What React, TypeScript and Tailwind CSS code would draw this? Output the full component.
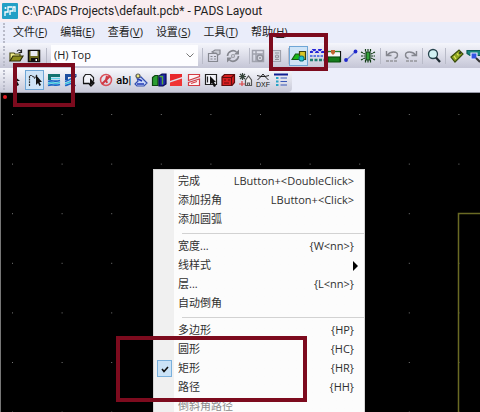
import type { ReactNode } from "react";

function Icon({ children }: { children: ReactNode }) {
  return (
    <svg viewBox="0 0 16 16" className="block size-4 shrink-0" fill="none" stroke="#111" strokeWidth="1.2" aria-hidden="true">
      {children}
    </svg>
  );
}

const icons = {
  open: (
    <Icon>
      <path d="M2 13V5h4l1 1h5v3" fill="#f3ef8e" stroke="#4b4a12" />
      <path d="M2 13l3-5h10l-3 5z" fill="#8c8b1c" stroke="#2c2c08" />
      <path d="M9 3.500c1-2 3-2 4 0M13.500 1.500v3h-3" stroke="#222" />
    </Icon>
  ),
  save: (
    <Icon>
      <path d="M2.500 2.500h11v11h-11z" fill="#6d6b1f" stroke="#111" strokeWidth="1.500" />
      <path d="M4.500 3h7v5h-7z" fill="#e9ebf3" stroke="none" />
      <path d="M5 10h7v4H5z" fill="#111" stroke="none" />
      <path d="M9.500 11h1.500v2H9.500z" fill="#fff" stroke="none" />
    </Icon>
  ),
  props: (
    <Icon>
      <path d="M2.500 5.500h9v8h-9zM4.500 8.500h2M8 8.500h2M4.500 11h2M8 11h2" stroke="#85878f" />
      <path d="M6 4l3-2h5v4l-2 1-2-2H8z" fill="#c9cbd3" stroke="#85878f" />
    </Icon>
  ),
  cycle: (
    <Icon>
      <path d="M2.500 8a5.500 5.500 0 0 1 9-4M13.500 8a5.500 5.500 0 0 1-9 4" stroke="#85878f" strokeWidth="1.600" />
      <path d="M14 1.500v5H9zM2 14.500v-5h5z" fill="#85878f" stroke="none" />
      <circle cx="8" cy="8" r="1.500" stroke="#9b9da5" />
    </Icon>
  ),
  disabledBoard: (
    <Icon>
      <path d="M2.500 2.500h11v11h-11zM2.500 6h11M6 2.500v11" stroke="#a0a2ad" strokeWidth="1.500" />
      <circle cx="10" cy="10" r="3" fill="#d4d6de" stroke="#8f919b" strokeWidth="1.500" />
      <circle cx="10" cy="10" r="1" fill="#8f919b" stroke="none" />
    </Icon>
  ),
  disabledPage: (
    <Icon>
      <path d="M4.500 2.500h8v11h-8z" fill="#d4d6df" stroke="#a0a2ad" />
      <path d="M7 5h4M7 11.500h4" stroke="#8f919b" />
      <circle cx="9" cy="8.500" r="1.500" stroke="#8f919b" />
    </Icon>
  ),
  drafting: (
    <Icon>
      <path d="M1 11.500l3.500-5.500h4l2 5.500z" fill="#19b819" stroke="#145a14" />
      <path d="M8.500 3.500h6v8h-4l-2-4z" fill="#d9c625" stroke="#3c4310" />
      <circle cx="10.500" cy="10.500" r="2.500" fill="#20c6d0" stroke="#0c7484" />
    </Icon>
  ),
  design: (
    <Icon>
      <path d="M1 4h2l1-2h2l1 2h2l1-2h2l1 2h2" stroke="#2525d8" strokeWidth="2.200" strokeDasharray="3 1" />
      <path d="M1 8h14" stroke="#3a5ae0" strokeWidth="1.600" strokeDasharray="2.500 1" />
      <path d="M1 12h14" stroke="#1f7f70" strokeWidth="2.600" strokeDasharray="3 1.500" />
    </Icon>
  ),
  dimension: (
    <Icon>
      <path d="M1.500 3v11M14.500 3v11" stroke="#111" />
      <path d="M2 3.500h12" stroke="#258229" />
      <path d="M2 9h12v5H2z" fill="#147b1b" stroke="#064c0b" />
      <path d="M2 6.500h12" stroke="#f5f7f5" strokeWidth="3" />
      <path d="M5 2h4v3L7 7 5 5z" fill="#c26632" stroke="none" />
    </Icon>
  ),
  route: (
    <Icon>
      <path d="M3.500 12l9-8.500" stroke="#6f80d8" />
      <circle cx="3" cy="12" r="1.900" fill="#2029cb" stroke="none" />
      <circle cx="12.500" cy="3.500" r="1.900" fill="#2029cb" stroke="none" />
    </Icon>
  ),
  chip: (
    <Icon>
      <path d="M6 4h4v8H6z" fill="#31a138" stroke="#123c16" />
      <path d="M8 1v3M8 12v3M5.500 1v3M10.500 1v3M5.500 12v3M10.500 12v3M1 4l4 2M15 4l-4 2M1 12l4-2M15 12l-4-2M1 8h4M11 8h4" stroke="#123c16" strokeDasharray="2 0.600" />
    </Icon>
  ),
  undo: (
    <Icon>
      <path d="M3.500 7c3-4 10-4 10 0 0 2-1 3-3 3.500M2.500 3v4.500h5" stroke="#85878f" strokeWidth="1.400" />
      <path d="M2 13h11" stroke="#777" strokeDasharray="3 1" />
    </Icon>
  ),
  redo: (
    <Icon>
      <path d="M12.500 7c-3-4-10-4-10 0 0 2 1 3 3 3.500M13.500 3v4.500h-5" stroke="#85878f" strokeWidth="1.400" />
      <path d="M3 13h11" stroke="#777" strokeDasharray="3 1" />
    </Icon>
  ),
  zoom: (
    <Icon>
      <circle cx="7" cy="6" r="4.500" fill="#d2f2f4" stroke="#26434c" strokeWidth="1.300" />
      <path d="M10 9.500l4 4.500" stroke="#1c2930" strokeWidth="2.200" />
    </Icon>
  ),
  board: (
    <Icon>
      <path d="M2 9l8-7 4 4-8 8z" fill="#8ca51f" stroke="#394b0b" />
      <path d="M5 8l2 3M8 5.500l1.500 2" stroke="#e9e667" />
      <circle cx="11" cy="5" r="1" fill="#223" stroke="none" />
    </Icon>
  ),
  boardZoom: (
    <Icon>
      <path d="M1 2.500h14v5H4l-3-2z" fill="#188780" stroke="#0a5d58" />
      <path d="M5 5h6v6H5z" fill="#3355e2" stroke="#e4e6ff" />
      <path d="M10 10l4 4" stroke="#333" strokeWidth="2" />
    </Icon>
  ),
  select: (
    <Icon>
      <path d="M5 3v9l2-2 2 4 2-1-2-4h3z" fill="#111" stroke="none" />
    </Icon>
  ),
  line: (
    <Icon>
      <path d="M2.500 14V3.500h2.500L7.500 6 10 3" stroke="#333" strokeDasharray="2 0.700" />
      <path d="M9 3v10l2-2 1.500 3 1.500-1-1.500-3H15z" fill="#111" stroke="none" />
    </Icon>
  ),
  copper: (
    <Icon>
      <path d="M2 2h12v3H5v3H2z" fill="#13736f" stroke="none" />
      <path d="M5 6.500h9" stroke="#5fd0e8" strokeWidth="1.500" />
      <path d="M2 9.500c4-2 7 1 12-1M2 13.500c4-2 7 1 12-1" stroke="#1866c8" strokeWidth="1.700" />
      <path d="M2 11.500c4-2 7 1 12-1" stroke="#35c3e0" strokeWidth="1.500" />
    </Icon>
  ),
  copperCut: (
    <Icon>
      <path d="M2 2h12l-3 3H5v3H2z" fill="#1d4f9f" stroke="none" />
      <path d="M2 9.500c3-1 4-1 6-3M2 13.500c4-1 6-1 9-4" stroke="#1866c8" strokeWidth="1.700" />
      <path d="M2 11.500c4-1 6-1 8-4" stroke="#35c3e0" strokeWidth="1.400" />
      <path d="M13.500 3.500L8.500 9l4 5" stroke="#17316f" />
    </Icon>
  ),
  cutout: (
    <Icon>
      <path d="M2.500 11.500V5.500l2-3h5l3 3v4" fill="#f3f4fa" stroke="#222" />
      <path d="M2 11.500h6l2 2.500 3-3" stroke="#111" strokeWidth="1.500" />
      <path d="M9 6v8l2-2 3-1z" fill="#111" stroke="none" />
    </Icon>
  ),
  keepout: (
    <Icon>
      <circle cx="8" cy="8" r="5.500" stroke="#d9505a" strokeWidth="1.500" />
      <path d="M4 12l8-8M9 4l-1 4 1 3" stroke="#cf3843" strokeWidth="2" />
    </Icon>
  ),
  library: (
    <Icon>
      <path d="M4 6l4-1 3 3 3 3-3 3H4l-2-2 3-3z" fill="#c9d7fa" stroke="#3550b0" />
      <path d="M5 7l4 2M4 12h7" stroke="#2139b4" strokeWidth="1.600" />
      <circle cx="5" cy="4" r="2" fill="#ece77e" stroke="#555" />
    </Icon>
  ),
  books: (
    <Icon>
      <path d="M1.500 5.500L4 3.500h3v10H1.500z" fill="#2b9d32" stroke="#0c4510" />
      <path d="M8 4l3-2h4v10l-3 2H8z" fill="#1d22a8" stroke="#080a54" />
      <path d="M8.500 4.500h3v8" stroke="#55a83c" strokeWidth="1.500" />
    </Icon>
  ),
  flood: (
    <Icon>
      <path d="M2 2h12v3L2 9z" fill="#e8282c" stroke="none" />
      <path d="M2 10.500l12-4V14H2z" fill="#f03434" stroke="none" />
    </Icon>
  ),
  hatch: (
    <Icon>
      <path d="M2.500 2.500h11v2l-11 4zM2.500 10.500l11-3.500v6.500h-11z" fill="#fdf3f4" stroke="#d33b43" />
      <path d="M5 11.500l6-2" stroke="#d33b43" />
    </Icon>
  ),
  pageSelect: (
    <Icon>
      <path d="M2.500 2.500h11v10h-11zM4.500 4.500v6" fill="#f1f2f8" stroke="#222" />
      <path d="M7 4v9l2-2 2 4 2-1-2-4h2z" fill="#111" stroke="none" />
    </Icon>
  ),
  plane: (
    <Icon>
      <path d="M2 5l2.500-2.500h10v8L12 13.500H2z" fill="#d91f20" stroke="#5e0d0d" />
      <path d="M2 5.500h9.500v8M11.500 5.500l3-3" stroke="#5e0d0d" />
      <path d="M4 8h2M8 8h2M4 11h5" stroke="#6e0d0d" />
    </Icon>
  ),
  bitmap: (
    <Icon>
      <path d="M2 2l5 5M7 2L2 7M4.500 1v7M1 4.500h7" stroke="#35443a" />
      <path d="M7.500 8l3-4 3 4v5.500h-6z" fill="#eee" stroke="#555" />
      <path d="M1 12h6M4 9v5" stroke="#d44" />
      <path d="M9.500 13.500V11h2v2.500" stroke="#555" />
    </Icon>
  ),
  list: (
    <Icon>
      <path d="M1 2.500h14" stroke="#101f92" strokeWidth="2" />
      <path d="M3 6h2.500M3 9.500h2.500M3 13h2.500" stroke="#27a3c6" strokeWidth="2" />
      <path d="M7.500 6H14M7.500 9.500H14M7.500 13H14" stroke="#3a58b8" strokeWidth="1.200" />
    </Icon>
  ),
  dxf: (
    <svg viewBox="0 0 16 16" className="block size-4 shrink-0" fill="none" stroke="#222" aria-hidden="true">
      <path d="M2 3.500l4 1 2-2.500 2 2.500 4-1M6 4.500L2.500 8M10 4.500L13.500 8M6 4.500h4" />
      <text x="1" y="15" fill="#111" stroke="none" className="font-['Liberation_Sans'] text-[7px]">DXF</text>
    </svg>
  ),
};

function ToolButton({ label, active = false, children }: { label: string; active?: boolean; children: ReactNode }) {
  return (
    <button
      type="button"
      aria-label={label}
      className={
        active
          ? "flex h-5 w-[19px] shrink-0 items-center justify-center border border-[#6fa6d6] bg-[#cfe4f7]"
          : "flex h-5 w-4 shrink-0 items-center justify-center"
      }
    >
      {children}
    </button>
  );
}

function Grip() {
  return <span className="mx-[3px] h-5 shrink-0 border-l-2 border-dotted border-[#b9bbc9]" />;
}

function Divider() {
  return <span className="h-4 w-px shrink-0 bg-[#b9bbc8]" />;
}

const menus = [
  ["文件", "F"],
  ["编辑", "E"],
  ["查看", "V"],
  ["设置", "S"],
  ["工具", "T"],
  ["帮助", "H"],
];

const drawingTools: { label: string; icon: ReactNode; active?: boolean }[] = [
  { label: "选择", icon: icons.select },
  { label: "2D 线", icon: icons.line, active: true },
  { label: "铜箔", icon: icons.copper },
  { label: "铜挖空", icon: icons.copperCut },
  { label: "板框", icon: icons.cutout },
  { label: "禁止区", icon: icons.keepout },
  { label: "文本", icon: <span className="font-['Roboto'] text-[11px] font-medium leading-none text-black">ab|</span> },
  { label: "库", icon: icons.library },
  { label: "从库中添加", icon: icons.books },
  { label: "灌铜", icon: icons.flood },
  { label: "填充", icon: icons.hatch },
  { label: "平面区域", icon: icons.pageSelect },
  { label: "平面", icon: icons.plane },
  { label: "位图", icon: icons.bitmap },
  { label: "导入 DXF", icon: icons.dxf },
  { label: "选项", icon: icons.list },
];

type Item = { label: string; keys?: string; submenu?: boolean; checked?: boolean; disabled?: boolean };

const itemGroups: Item[][] = [
  [{ label: "完成", keys: "LButton+<DoubleClick>" }, { label: "添加拐角", keys: "LButton+<Click>" }, { label: "添加圆弧" }],
  [{ label: "宽度...", keys: "{W<nn>}" }, { label: "线样式", submenu: true }, { label: "层...", keys: "{L<nn>}" }, { label: "自动倒角" }],
  [
    { label: "多边形", keys: "{HP}" },
    { label: "圆形", keys: "{HC}" },
    { label: "矩形", keys: "{HR}", checked: true },
    { label: "路径", keys: "{HH}" },
    { label: "倒斜角路径", disabled: true },
  ],
];

function MenuItem({ item }: { item: Item }) {
  return (
    <button
      type="button"
      disabled={item.disabled}
      className="flex h-[19px] w-full items-center whitespace-nowrap pr-[10px] text-left text-[#303030] disabled:text-[#8c8c8c]"
    >
      <span className="flex w-6 shrink-0 items-center pl-[3px]">
        {item.checked && (
          <span className="flex h-[17px] w-[15px] items-center justify-center border border-[#7ab0dc] bg-[#cbe3f7]">
            <svg viewBox="0 0 8 8" className="size-2" fill="none" stroke="#111" strokeWidth="1.600" aria-hidden="true">
              <path d="M1 4l2 2.500L7 2" />
            </svg>
          </span>
        )}
      </span>
      <span className="grow">{item.label}</span>
      {item.keys && <span>{item.keys}</span>}
      {item.submenu && (
        <svg viewBox="0 0 5 10" className="-mr-1 h-[10px] w-[5px]" fill="#000" aria-hidden="true">
          <path d="M0 0l5 5-5 5z" />
        </svg>
      )}
    </button>
  );
}

function ContextMenu() {
  return (
    <div className="absolute left-[152px] top-[76px] w-[212px] border border-[#d6d6d6] bg-linear-to-r from-[#f0f0f0] from-[20px] to-[#fcfcfc] to-[20px] pt-[2px] text-[11px]">
      {itemGroups.map((group, i) => (
        <div key={i}>
          {i > 0 && (
            <div className="flex h-2 items-center pl-7">
              <div className="h-px w-full bg-[#d2d2d2]" />
            </div>
          )}
          {group.map((item) => (
            <MenuItem key={item.label} item={item} />
          ))}
        </div>
      ))}
    </div>
  );
}

export default function App() {
  return (
    <div className="relative flex h-screen flex-col overflow-hidden bg-black font-['Open_Sans','Noto_Sans_CJK_SC',sans-serif] text-[#222]">
      <header className="flex h-[22px] shrink-0 items-center gap-1 bg-[#f9edf0] pl-[2px]">
        <svg viewBox="0 0 16 16" className="size-4" aria-hidden="true">
          <rect width="16" height="16" rx="1" fill="#23a0c6" />
          <path d="M3 13V9h3V4h4M8 12V8h3V4h2v5" fill="none" stroke="#fff" strokeWidth="1.300" />
          <circle cx="3.500" cy="5" r="1" fill="#fff" />
        </svg>
        <h1 className="whitespace-nowrap font-['Roboto'] text-xs">C:\PADS Projects\default.pcb* - PADS Layout</h1>
      </header>

      <nav className="flex h-[21px] shrink-0 items-center bg-[#eaedfa] text-[11px]">
        <Grip />
        <div className="flex gap-[13px] pl-[5px]">
          {menus.map(([name, key]) => (
            <button type="button" key={key} className="whitespace-nowrap">
              {name}(<span className="underline">{key}</span>)
            </button>
          ))}
        </div>
      </nav>

      <div className="flex h-[25px] shrink-0 items-center bg-linear-to-b from-[#f5f6fc] to-[#c5c6d6]">
        <Grip />
        <div className="flex items-center gap-[2px] pr-1">
          <ToolButton label="打开">{icons.open}</ToolButton>
          <ToolButton label="保存">{icons.save}</ToolButton>
        </div>
        <Divider />
        <div className="relative mx-1 h-[21px] w-[147px] shrink-0">
          <select aria-label="层" className="block size-full appearance-none bg-[#fdfdff] pl-[3px] text-[11px]">
            <option>(H) Top</option>
          </select>
          <svg viewBox="0 0 8 5" className="pointer-events-none absolute right-1 top-2 h-[5px] w-2" fill="none" stroke="#777" aria-hidden="true">
            <path d="M0.500 0.500L4 4l3.500-3.500" />
          </svg>
        </div>
        <Divider />
        <div className="flex items-center gap-[3px] px-[3px] pr-2">
          <ToolButton label="特性">{icons.props}</ToolButton>
          <ToolButton label="循环">{icons.cycle}</ToolButton>
        </div>
        <Divider />
        <div className="flex items-center gap-[2px] pr-1">
          <ToolButton label="板">{icons.disabledBoard}</ToolButton>
          <ToolButton label="页">{icons.disabledPage}</ToolButton>
        </div>
        <Divider />
        <div className="flex items-center gap-px pr-1">
          <ToolButton label="绘图工具栏" active>{icons.drafting}</ToolButton>
          <ToolButton label="设计工具栏">{icons.design}</ToolButton>
          <ToolButton label="尺寸标注工具栏">{icons.dimension}</ToolButton>
          <ToolButton label="布线">{icons.route}</ToolButton>
          <ToolButton label="元件">{icons.chip}</ToolButton>
        </div>
        <Divider />
        <div className="flex items-center gap-[3px] px-[3px]">
          <ToolButton label="撤销">{icons.undo}</ToolButton>
          <ToolButton label="重做">{icons.redo}</ToolButton>
        </div>
        <Divider />
        <div className="px-[3px]">
          <ToolButton label="缩放">{icons.zoom}</ToolButton>
        </div>
        <Divider />
        <div className="flex items-center gap-px pl-[3px]">
          <ToolButton label="整板">{icons.board}</ToolButton>
          <ToolButton label="板缩放">{icons.boardZoom}</ToolButton>
        </div>
      </div>

      <div className="flex h-[25px] shrink-0 border-b border-[#9899a8] bg-[#eceefa]">
        <div className="flex w-[292px] items-center rounded-r-sm bg-linear-to-b from-[#f8f9fd] to-[#c9cad9] pr-[3px]">
          <Grip />
          <div className="flex grow items-center justify-between">
            {drawingTools.map((tool) => (
              <ToolButton key={tool.label} label={tool.label} active={tool.active}>
                {tool.icon}
              </ToolButton>
            ))}
          </div>
        </div>
      </div>

      <main className="relative grow border-l border-[#777]">
        <svg className="absolute inset-0 size-full" aria-hidden="true">
          <defs>
            <pattern id="grid" x="11" y="21" width="49.600" height="49.600" patternUnits="userSpaceOnUse">
              <rect width="1" height="1" fill="#777" />
            </pattern>
          </defs>
          <rect width="100%" height="100%" fill="url(#grid)" />
          <circle cx="4" cy="4" r="2" fill="#e01b24" />
          <path d="M520 120.500H457.500V400" fill="none" stroke="#6a6a24" strokeWidth="1.500" />
        </svg>
        <ContextMenu />
      </main>

      <div className="pointer-events-none absolute left-[13px] top-[63px] h-11 w-[62px] border-4 border-[#7d0b1e]" />
      <div className="pointer-events-none absolute left-[269px] top-[33px] h-[38px] w-[59px] border-4 border-[#7d0b1e]" />
      <div className="pointer-events-none absolute left-[116px] top-[336px] h-[66px] w-[191px] border-4 border-[#7d0b1e]" />
    </div>
  );
}
